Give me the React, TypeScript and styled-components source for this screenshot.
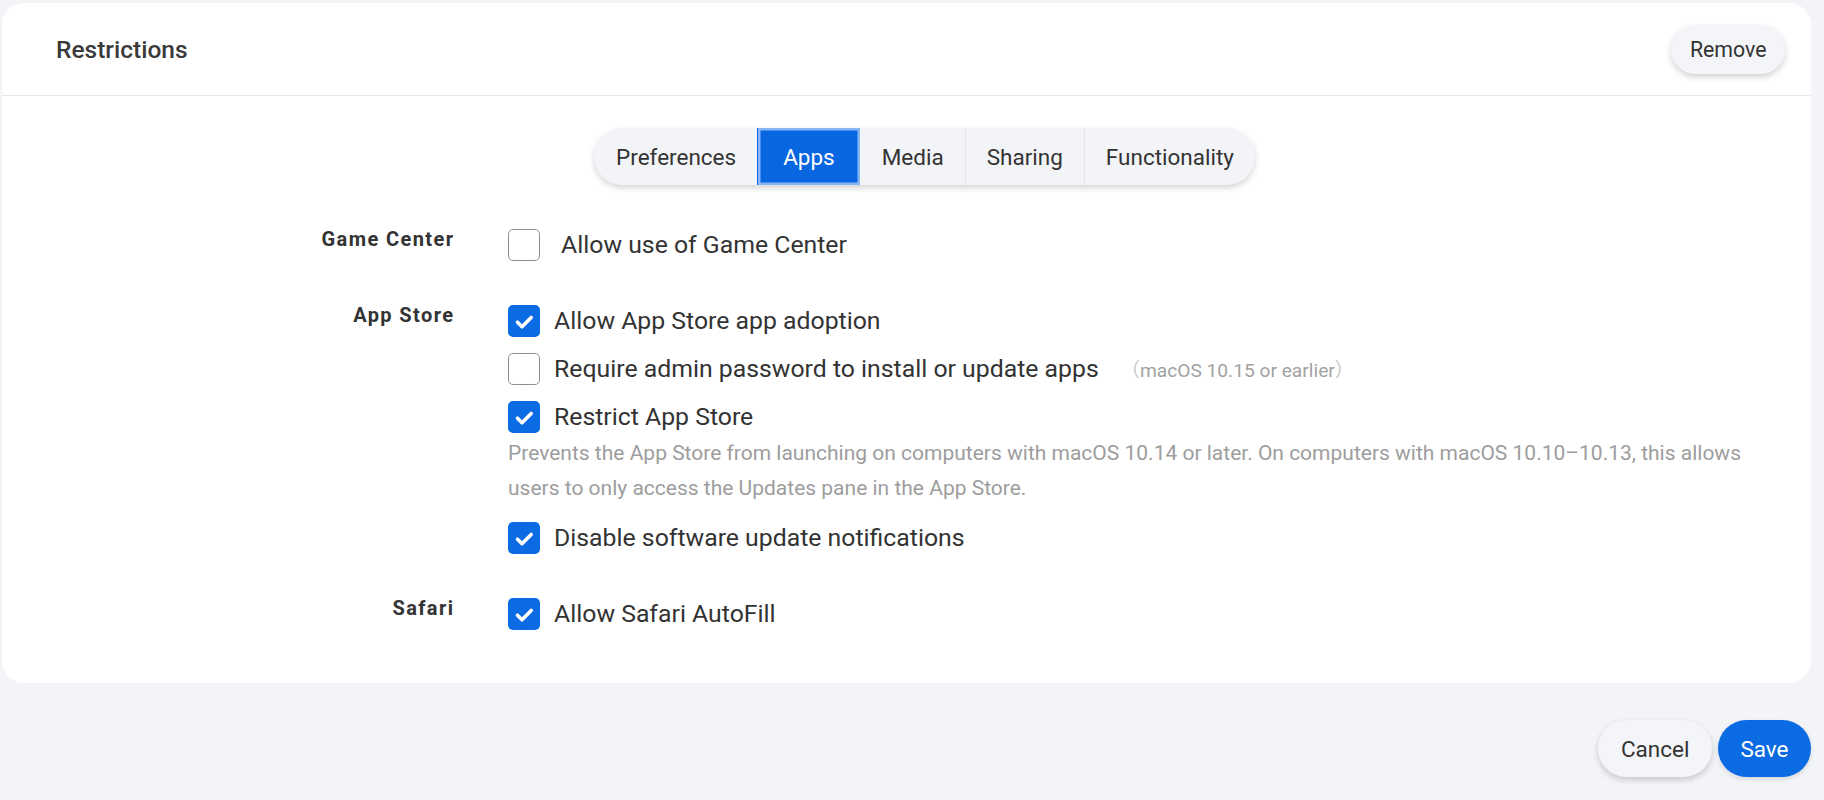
import React from "react";
import styled, { createGlobalStyle, css } from "styled-components";

const GlobalStyle = createGlobalStyle`
  html, body {
    margin: 0;
    padding: 0;
    background: #f3f4f8;
  }
  body {
    font-family: Roboto, "Noto Sans", Arial, sans-serif;
    color: #333;
    -webkit-font-smoothing: antialiased;
  }
  * { box-sizing: border-box; }
`;

const Page = styled.div`
  padding: 3px 13px 23px 2px;
`;

const Card = styled.section`
  background: #fff;
  border-radius: 22px;
  padding-bottom: 53px;
`;

const Header = styled.header`
  height: 93px;
  display: flex;
  align-items: center;
  justify-content: space-between;
  padding: 0 26px 0 54px;
  border-bottom: 1px solid #e7e8eb;
`;

const Title = styled.h1`
  margin: 0;
  font-size: 24.5px;
  font-weight: 500;
  color: #3a3a3a;
`;

const PillButton = styled.button<{ $primary?: boolean; $large?: boolean }>`
  border: none;
  font-family: inherit;
  cursor: pointer;
  border-radius: 999px;
  height: ${(p) => (p.$large ? "57px" : "49px")};
  padding: 0 ${(p) => (p.$large ? "22.5px" : "18.5px")};
  font-size: ${(p) => (p.$large ? "22.5px" : "21.3px")};
  background: ${(p) => (p.$primary ? "#0b6be2" : "#f4f5f9")};
  color: ${(p) => (p.$primary ? "#fff" : "#333")};
  box-shadow: ${(p) =>
    p.$primary ? "0 2px 5px rgba(0,0,0,0.12)" : "0 3px 6px rgba(0,0,0,0.18)"};
`;

const TabRow = styled.div`
  display: flex;
  justify-content: center;
  padding-left: 36px;
  margin-top: 32px;
`;

const TabGroup = styled.div`
  display: flex;
  height: 57px;
  border-radius: 29px;
  overflow: hidden;
  background: #f3f4f8;
  box-shadow: 0 3px 6px rgba(0, 0, 0, 0.17);
`;

const Tab = styled.button<{ $active?: boolean; $divider?: boolean }>`
  border: none;
  font-family: inherit;
  font-size: 22.5px;
  padding: 0 21px;
  background: transparent;
  color: #333;
  cursor: pointer;
  border-left: 1px solid ${(p) => (p.$divider ? "#e3e4e9" : "transparent")};
  &:first-child {
    padding-left: 22px;
    border-left: none;
  }
  ${(p) =>
    p.$active &&
    css`
      background: #0866e1;
      color: #fff;
      padding: 0 25px;
      box-shadow: inset 0 0 0 2.5px #86b7f4;
    `}
`;

const Form = styled.div`
  display: grid;
  grid-template-columns: 451px 1fr;
  column-gap: 55px;
  row-gap: 44px;
  margin-top: 44px;
  padding-right: 30px;
`;

const SectionLabel = styled.div`
  text-align: right;
  font-size: 20px;
  font-weight: 700;
  letter-spacing: 1.4px;
  margin-right: -1.4px;
  line-height: 20px;
  color: #333;
`;

const Options = styled.div`
  display: flex;
  flex-direction: column;
  gap: 16px;
`;

const OptionRow = styled.label<{ $gap?: number }>`
  display: flex;
  align-items: center;
  gap: ${(p) => p.$gap ?? 14}px;
  height: 32px;
  cursor: pointer;
`;

const Box = styled.span<{ $checked?: boolean }>`
  flex: none;
  width: 32px;
  height: 32px;
  border-radius: 5px;
  display: flex;
  align-items: center;
  justify-content: center;
  background: ${(p) => (p.$checked ? "#0b6be2" : "#fff")};
  border: ${(p) => (p.$checked ? "none" : "1.3px solid #8e8e8e")};
`;

const OptionText = styled.span`
  font-size: 24.8px;
  line-height: 32px;
  color: #333;
  white-space: nowrap;
`;

const Note = styled.span`
  font-size: 19.2px;
  color: #a2a2a2;
  margin-left: 8px;
  font-family: Roboto, "Noto Sans CJK SC", sans-serif;
  white-space: nowrap;
`;

const Paren = styled.span`
  color: #c8c8c8;
`;

const Description = styled.p`
  margin: -13px 0 0;
  font-size: 21px;
  line-height: 35px;
  color: #9d9d9d;
`;

const Footer = styled.div`
  display: flex;
  justify-content: flex-end;
  gap: 6px;
  margin-top: 37px;
`;

const Checkbox: React.FC<{ checked?: boolean }> = ({ checked }) => (
  <Box $checked={checked} role="checkbox" aria-checked={!!checked}>
    {checked && (
      <svg width="32" height="32" viewBox="0 0 32 32" fill="none">
        <path
          d="M9.5 17.2 L14 21.7 L23.2 12.5"
          stroke="#fff"
          strokeWidth="3.6"
          strokeLinecap="round"
          strokeLinejoin="round"
        />
      </svg>
    )}
  </Box>
);

const Option: React.FC<{
  checked?: boolean;
  gap?: number;
  children: React.ReactNode;
}> = ({ checked, gap, children }) => (
  <OptionRow $gap={gap}>
    <Checkbox checked={checked} />
    <OptionText>{children}</OptionText>
  </OptionRow>
);

const tabs = ["Preferences", "Apps", "Media", "Sharing", "Functionality"];
const activeTab = "Apps";

export default function App() {
  return (
    <>
      <GlobalStyle />
      <Page>
        <Card>
          <Header>
            <Title>Restrictions</Title>
            <PillButton>Remove</PillButton>
          </Header>

          <TabRow>
            <TabGroup>
              {tabs.map((t, i) => (
                <Tab
                  key={t}
                  $active={t === activeTab}
                  $divider={i > 0 && t !== activeTab && tabs[i - 1] !== activeTab}
                >
                  {t}
                </Tab>
              ))}
            </TabGroup>
          </TabRow>

          <Form>
            <SectionLabel>Game Center</SectionLabel>
            <Options>
              <Option gap={21}>Allow use of Game Center</Option>
            </Options>

            <SectionLabel>App Store</SectionLabel>
            <Options>
              <Option checked>Allow App Store app adoption</Option>
              <OptionRow>
                <Checkbox />
                <OptionText>
                  Require admin password to install or update apps
                </OptionText>
                <Note>
                  <Paren>（</Paren>macOS 10.15 or earlier<Paren>）</Paren>
                </Note>
              </OptionRow>
              <Option checked>Restrict App Store</Option>
              <Description>
                Prevents the App Store from launching on computers with macOS
                10.14 or later. On computers with macOS 10.10–10.13, this allows
                users to only access the Updates pane in the App Store.
              </Description>
              <Option checked>Disable software update notifications</Option>
            </Options>

            <SectionLabel>Safari</SectionLabel>
            <Options>
              <Option checked>Allow Safari AutoFill</Option>
            </Options>
          </Form>
        </Card>

        <Footer>
          <PillButton $large>Cancel</PillButton>
          <PillButton $large $primary>
            Save
          </PillButton>
        </Footer>
      </Page>
    </>
  );
}
